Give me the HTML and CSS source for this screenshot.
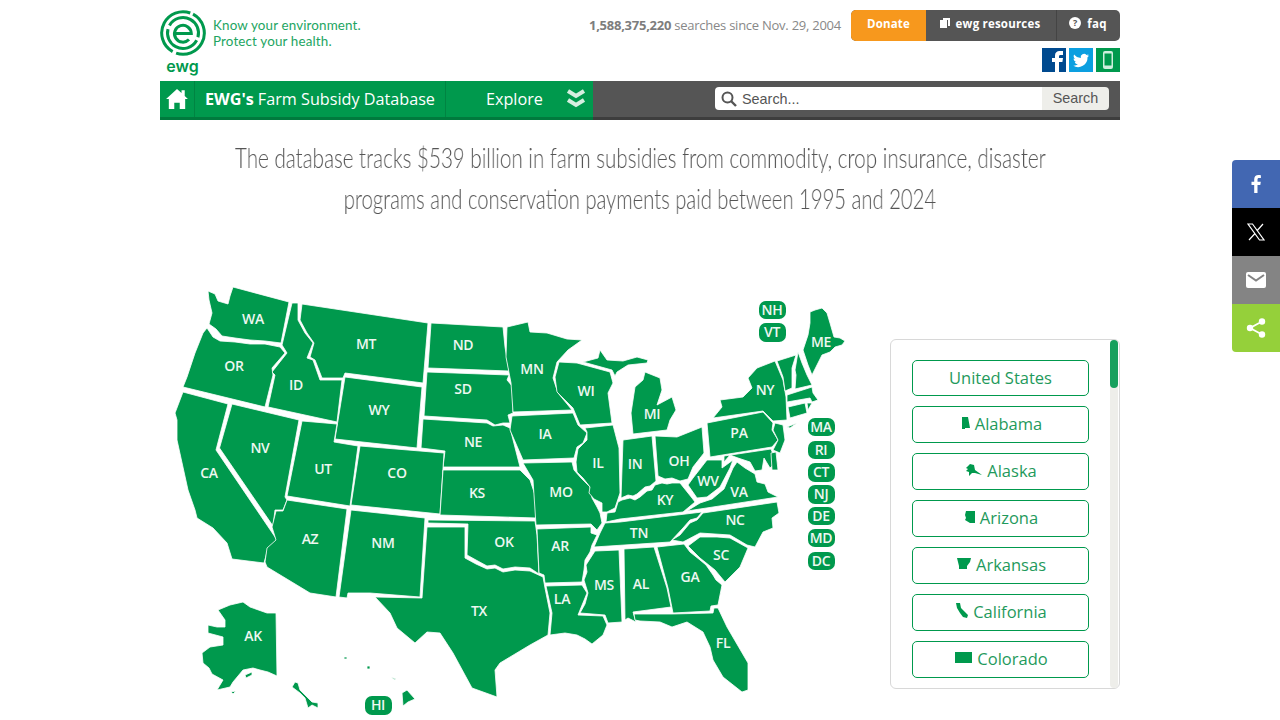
FILE: index.html
```html
<!DOCTYPE html>
<html lang="en">
<head>
<meta charset="utf-8">
<title>EWG's Farm Subsidy Database</title>
<link rel="stylesheet" href="styles.css">
</head>
<body>
<div class="page">
  <header class="top">
    <div class="brand">
      <div class="brand-mark">
        <svg class="logo" viewBox="0 0 46 46" width="46" height="46">
          <g fill="none" stroke="#00994d" stroke-width="3">
            <circle cx="23" cy="23" r="21.300" stroke-dasharray="63 3.900" transform="rotate(-62 23 23)"/>
            <circle cx="23" cy="23" r="15.500" stroke-dasharray="44.700 4" transform="rotate(28 23 23)"/>
            <path d="M14.500 23.500H31.300A8.400 8.400 0 1 0 29 29.500"/>
          </g>
        </svg>
        <span class="ewg">ewg</span>
      </div>
      <p class="tagline">Know your environment.<br>Protect your health.</p>
    </div>
    <div class="top-right">
      <div class="top-row">
        <span class="count"><b>1,588,375,220</b> searches since Nov. 29, 2004</span>
        <nav class="pills">
          <a class="pill donate">Donate</a>
          <a class="pill res">
            <svg viewBox="0 0 10 10" width="10" height="10"><path fill="#fff" d="M3 0h7v8H8V2H3zM0 2h7v8H0z"/></svg>
            ewg resources</a>
          <a class="pill faq"><span class="q">?</span>faq</a>
        </nav>
      </div>
      <div class="social">
        <span class="soc fb"><svg viewBox="0 0 24 24" width="24" height="24"><path fill="#fff" d="M13 24V14h-3v-4h3V7.500C13 4.500 15 3 17.500 3H21v4h-2.500C17.500 7 17 7.500 17 8.500V10h4l-.6 4H17v10z"/></svg></span>
        <span class="soc tw"><svg viewBox="0 0 24 24" width="24" height="24"><path fill="#fff" d="M20 7.500c-.6.3-1.200.4-1.900.5.700-.4 1.200-1 1.400-1.800-.6.4-1.300.6-2 .8a3.300 3.300 0 0 0-5.700 3C9 9.900 6.600 8.600 5.100 6.600c-.9 1.500-.4 3.400 1 4.400-.5 0-1-.2-1.500-.4 0 1.600 1.100 3 2.700 3.300-.5.100-1 .2-1.500.1.400 1.300 1.600 2.300 3.100 2.300A6.700 6.700 0 0 1 4 17.600 9.400 9.400 0 0 0 18.500 9.300c.6-.5 1.100-1.100 1.500-1.800z"/></svg></span>
        <span class="soc ph"><svg viewBox="0 0 24 24" width="24" height="24"><rect x="7" y="3" width="10" height="18" rx="2" fill="#cfeedd"/><rect x="8.500" y="5.500" width="7" height="12" fill="#00994d"/></svg></span>
      </div>
    </div>
  </header>

  <div class="navbar">
    <div class="nav-green">
      <a class="nav-home"><svg viewBox="0 0 24 22" width="24" height="20"><path fill="#fff" d="M12 0l5 4.500V1.500h3.500v6.200L24 11h-3v11h-6v-7H9v7H3V11H0z"/></svg></a>
      <a class="nav-title"><b>EWG's</b> Farm Subsidy Database</a>
      <a class="nav-explore">Explore
        <svg class="chev" viewBox="0 0 20 20" width="20" height="20"><path fill="none" stroke="#d6efe0" stroke-width="4" d="M2 2l8 5 8-5M2 11l8 5 8-5"/></svg>
      </a>
    </div>
    <div class="nav-gray">
      <form class="search">
        <span class="search-box">
          <svg viewBox="0 0 16 16" width="16" height="16"><circle cx="6.500" cy="6.500" r="5" fill="none" stroke="#555" stroke-width="2"/><path stroke="#555" stroke-width="2.400" d="M10 10l5 5"/></svg>
          Search...
        </span>
        <span class="search-btn">Search</span>
      </form>
    </div>
  </div>

  <h1 class="lead"><span class="l1">The database tracks $539 billion in farm subsidies from commodity, crop insurance, disaster</span><span class="l2">programs and conservation payments paid between 1995 and 2024</span></h1>

  <main class="content">
    <svg class="map" viewBox="160 280 700 440" width="700" height="440">
      <g class="states">
        <path d="M208 291L215 294 218 301 228 304 230 296 233 287 289 302 281 343 265 341 250 340 235 338 222 336 216 329 209 324 212 313 209 300Z"/>
        <path d="M207 328L213 337 220 341 235 342 250 344 265 344 280 347 285 353 272 368 273 375 265 407 183 387 187 377 195 353 203 333Z"/>
        <path d="M292 303L298 303 298 320 305 333 313 343 307 358 313 360 320 380 342 380 337 422 268 407 275 375 272 372 287 353 282 345Z"/>
        <path d="M302 304L428 323 423 383 345 373 343 378 322 378 315 360 310 357 314 343 307 333 300 320Z"/>
        <path d="M431 323L503 327 505 347 509 371 428 368Z"/>
        <path d="M427 372L509 375 507 380 513 387 513 413 508 415 510 423 503 423 495 425 487 420 424 416Z"/>
        <path d="M345 377L422 387 417 448 335 439Z"/>
        <path d="M423 419L487 423 493 426 503 425 510 428 520 467 443 467 445 451 421 448Z"/>
        <path d="M232 404L299 420 285 497 287 500 283 510 275 510 273 526 219.500 448Z"/>
        <path d="M183 392L228 404 216 450 271 531 277 540 267 552 264 563 232 559 227 543 213 528 197 518 195 510 188 490 177 440 177 420 175 413Z"/>
        <path d="M302 421L337 424 334 442 358 446 350 506 287 496Z"/>
        <path d="M360 446L444 453 440 514 351 505Z"/>
        <path d="M287 500L347 509 336 597 310 593 267 567 265 562 267 548 276 540 272 527 276 511 283 511Z"/>
        <path d="M351 510L425 518 420 597 370 593 348 593 347 598 339 597Z"/>
        <path d="M427 527L465 527 465 558 476 564 487 569 495 568 503 572 515 570 530 571 543 577 545 588 550 613 548 635 530 645 500 663 495 670 497 697 472 688 453 653 440 633 427 632 415 643 397 628 390 613 375 597 422 598Z"/>
        <path d="M428 520L535 521 537 535 539 574 530 568 515 567 503 569 495 565 487 566 476 560 467 555 468 524 428 523Z"/>
        <path d="M443 470L520 470 530 480 535 495 537 518 440 515Z"/>
        <path d="M507 327L528 322 530 332 547 333 567 339 582 340 568 350 557 362 553 378 558 393 572 410 513 412 511 383 506 357Z"/>
        <path d="M512 416L573 413 578 425 587 433 583 443 577 447 574 458 523 460 510 430Z"/>
        <path d="M523 463L572 462 574 470 581 478 590 487 592 498 597 507 600 513 602 523 597 530 591 524 536 525 535 510 533 480Z"/>
        <path d="M537 529L591 527 591 533 597 535 592 545 590 552 585 560 584 570 582 582 545 583 544 575 539 573Z"/>
        <path d="M546 586L582 585 587 593 578 615 603 616 607 625 603 635 592 644 585 639 577 635 565 633 550 635 552 613Z"/>
        <path d="M595 551L619 550 622 622 608 623 605 615 580 613 585 604 588 593 584 580 587 572 586 565Z"/>
        <path d="M624 549L654 547 667 588 671 607 633 612 636 622 628 618 625 620Z"/>
        <path d="M657 547L684 544 690 552 700 560 706 565 713 575 716 580 722 585 718 605 711 606 710 611 673 613 668 588Z"/>
        <path d="M634 614L672 614 713 613 714 608 718 608 727 627 748 663 748 690 742 692 723 677 713 660 710 647 703 632 687 622 672 627 660 622 640 621 635 620Z"/>
        <path d="M688 546L700 537 717 537 730 538 748 548 740 567 725 582 715 570 700 558Z"/>
        <path d="M672 540L680 535 690 523 697 520 703 513 777 502 779 513 772 518 773 528 763 532 755 547 747 545 730 535 700 533 683 542Z"/>
        <path d="M620 522L702 512 697 518 690 520 683 528 670 542 594 547 600 533 605 523Z"/>
        <path d="M622 500L630 498 635 500 640 497 647 491 652 490 655 485 662 483 667 484 672 483 680 483 692 498 695 502 683 512 620 519 606 522 607 513 615 512 618 502Z"/>
        <path d="M585 428L613 425 619 448 620 493 615 508 607 512 602 512 602 503 594 499 589 493 590 487 583 478 577 472 576 462 577 455 578 449 583 444 587 440 587 432Z"/>
        <path d="M623 440L652 436 656 481 650 486 645 487 637 494 633 496 628 495 621 498Z"/>
        <path d="M655 436L677 437 702 427 704 453 693 467 688 479 680 481 672 478 665 479 658 476Z"/>
        <path d="M645 372L660 378 662 390 657 405 672 397 676 410 670 420 667 430 633 434 631 413 635 387 643 380Z"/>
        <path d="M583 362L598 358 600 350 607 360 623 361 637 357 648 360 647 363 628 365 617 372 615 376 612 370Z"/>
        <path d="M559 362L577 363 610 372 613 383 608 393 612 423 580 425 573 408 557 392 555 377Z"/>
        <path d="M693 478L707 460 722 460 722 468 733 460 730 468 720 487 707 497 697 498 688 485Z"/>
        <path d="M733 468L737 462 745 468 755 474 757 482 765 484 768 492 778 497 687 511 700 503 712 499 724 489Z"/>
        <path d="M707 423L763 412 773 423 772 430 778 440 772 447 710 457Z"/>
        <path d="M724 456L771 449 776 462 770 468 764 458 762 470 755 471 750 462 738 458 730 455 724 462Z"/>
        <path d="M771 453L776 452 778 470 772 470Z"/>
        <path d="M775 423L783 425 785 440 780 453 773 450 778 440 773 430Z"/>
        <path d="M775 361L783 380 786 397 787 420 773 421 763 411 713 418 722 407 720 400 743 397 752 388 748 378 757 368Z"/>
        <path d="M787 427L797 423 790 428Z"/>
        <path d="M777 361L796 355 792 368 792 388 785 391 783 377Z"/>
        <path d="M798 352L802 363 807 375 812 385 795 389 796 375 795 370Z"/>
        <path d="M810 312L815 310 822 308 827 313 830 323 834 337 840 338 845 341 842 345 835 347 830 352 822 355 817 365 812 375 808 365 803 350 808 335 810 323Z"/>
        <path d="M787 395L812 387 813 393 818 400 812 402 810 398 787 402Z"/>
        <path d="M788 407L805 403 807 413 790 418Z"/>
        <path d="M807 403L812 403 808 410Z"/>
        <path d="M218 610L230 605 243 602 250 607 267 613 276 613 277 676 268 672 260 670 253 668 243 670 233 682 230 687 217 690 223 680 212 674 209 668 203 663 202 653 210 647 223 645 223 637 208 633 208 625 217 627 225 627 225 620Z"/>
        <path d="M292 687L295 682 298 683 300 690 307 697 312 702 318 703 318 708 312 705 308 708 305 698 300 693Z"/>
        <path d="M245 675L252 672 252 675 246 678Z"/>
        <path d="M231 692L236 691 233 694Z"/>
        <path d="M402 693L407 690 415 699 408 702 403 706Z"/>
        <path d="M344 657L347 657 347 659 344 659Z"/>
        <path d="M367 666L370 666 370 669 367 669Z"/>
        <path d="M391 677L396 679 395 680Z"/>
      </g>
      <g class="labels">
        <text x="253" y="324">WA</text><text x="234" y="371">OR</text><text x="296" y="390">ID</text>
        <text x="366" y="349">MT</text><text x="463" y="350">ND</text><text x="463" y="394">SD</text>
        <text x="379" y="415">WY</text><text x="260" y="453">NV</text><text x="209" y="478">CA</text>
        <text x="323" y="474">UT</text><text x="397" y="478">CO</text><text x="473" y="447">NE</text>
        <text x="477" y="498">KS</text><text x="310" y="544">AZ</text><text x="383" y="548">NM</text>
        <text x="504" y="547">OK</text><text x="479" y="616">TX</text><text x="253" y="641">AK</text>
        <text x="532" y="374">MN</text><text x="586" y="396">WI</text><text x="652" y="419">MI</text>
        <text x="545" y="439">IA</text><text x="598" y="468">IL</text><text x="635" y="469">IN</text>
        <text x="679" y="466">OH</text><text x="665" y="505">KY</text><text x="708" y="486">WV</text>
        <text x="739" y="497">VA</text><text x="735" y="525">NC</text><text x="639" y="538">TN</text>
        <text x="561" y="497">MO</text><text x="560" y="551">AR</text><text x="562" y="604">LA</text>
        <text x="604" y="590">MS</text><text x="641" y="589">AL</text><text x="690" y="582">GA</text>
        <text x="721" y="560">SC</text><text x="723" y="648">FL</text><text x="739" y="438">PA</text>
        <text x="765" y="395">NY</text><text x="821" y="347">ME</text>
      </g>
      <g class="tags">
        <rect x="759" y="301" width="27" height="18" rx="7"/><text x="772" y="315">NH</text>
        <rect x="759" y="323" width="27" height="19" rx="7"/><text x="772" y="337">VT</text>
        <rect x="808" y="418" width="27" height="18" rx="7"/><text x="821" y="432">MA</text>
        <rect x="808" y="441" width="27" height="18" rx="7"/><text x="821" y="455">RI</text>
        <rect x="808" y="463" width="27" height="19" rx="7"/><text x="821" y="477">CT</text>
        <rect x="808" y="485" width="27" height="19" rx="7"/><text x="821" y="499">NJ</text>
        <rect x="808" y="507" width="27" height="18" rx="7"/><text x="821" y="521">DE</text>
        <rect x="808" y="529" width="27" height="18" rx="7"/><text x="821" y="543">MD</text>
        <rect x="808" y="552" width="27" height="18" rx="7"/><text x="821" y="566">DC</text>
        <rect x="365" y="696" width="27" height="19" rx="7"/><text x="378" y="710">HI</text>
      </g>
    </svg>

    <aside class="panel">
      <div class="list">
        <a class="item first">United States</a>
        <a class="item"><svg viewBox="0 0 9 12" width="9" height="12"><path d="M1 0h6l2 11-5 0 0 1H1z"/></svg>Alabama</a>
        <a class="item"><svg viewBox="0 0 16 12" width="16" height="12"><path d="M1 3L4 0l4 1 1 5 7 5-7-2-3 0-3 3 0-4-3-1 2-2-2-1z"/></svg>Alaska</a>
        <a class="item"><svg viewBox="0 0 10 12" width="10" height="12"><path d="M1 0h9v12H5L0 9l1-2-1-3z"/></svg>Arizona</a>
        <a class="item"><svg viewBox="0 0 14 11" width="14" height="11"><path d="M0 0h14l-1 4-3 4v3H2V8z"/></svg>Arkansas</a>
        <a class="item"><svg viewBox="0 0 12 15" width="12" height="15"><path d="M0 0h4l1 5 7 7-1 3-4-1-3-4-3-5z"/></svg>California</a>
        <a class="item"><svg viewBox="0 0 17 11" width="17" height="11"><path d="M0 0h17v11H0z"/></svg>Colorado</a>
      </div>
      <div class="track"><div class="thumb"></div></div>
    </aside>
  </main>
</div>

<div class="share">
  <a class="sh sh-fb"><svg viewBox="0 0 24 24" width="24" height="24"><path fill="#fff" d="M13.500 21v-8h2.800l.5-3.200h-3.300V7.700c0-1 .3-1.600 1.700-1.600h1.700V3.200c-.3 0-1.300-.2-2.500-.2-2.500 0-4.200 1.500-4.200 4.300v2.500H7.500V13h2.700v8z"/></svg></a>
  <a class="sh sh-x"><svg viewBox="0 0 24 24" width="24" height="24"><path fill="none" stroke="#fff" stroke-width="1.200" d="M4 4h4.500l11.500 16h-4.500zM19 4l-6.200 7M11 13.500L5 20"/></svg></a>
  <a class="sh sh-mail"><svg viewBox="0 0 24 24" width="24" height="24"><rect x="2" y="4" width="20" height="16" rx="2" fill="#fff"/><path fill="none" stroke="#848484" stroke-width="2" d="M4 7l8 5.500L20 7"/></svg></a>
  <a class="sh sh-more"><svg viewBox="0 0 24 24" width="24" height="24"><g fill="#fff"><circle cx="18" cy="5.500" r="3.200"/><circle cx="6" cy="12" r="3.200"/><circle cx="18" cy="18.500" r="3.200"/></g><path stroke="#fff" stroke-width="1.800" d="M18 5.500L6 12l12 6.500" fill="none"/></svg></a>
</div>
</body>
</html>
```
FILE: styles.css
```css
* { box-sizing: border-box; }
html, body { margin: 0; height: 720px; overflow: hidden; background: #fff; }
body { font-family: "Open Sans", sans-serif; color: #555; }
a { text-decoration: none; color: inherit; }

.page { width: 960px; margin: 0 auto; }

.top { display: flex; justify-content: space-between; height: 81px; padding-top: 10px; }
.brand { display: flex; align-items: flex-start; gap: 7px; }
.brand-mark { width: 46px; display: flex; flex-direction: column; align-items: center; }
.logo { display: block; }
.ewg { font-family: Inter, sans-serif; font-size: 16px; line-height: 16px; font-weight: 600; color: #00994d; margin-top: 2px; margin-left: -1px; }
.tagline { margin: 7px 0 0; font-family: Lato, sans-serif; font-size: 13.400px; line-height: 16px; color: #1da562; letter-spacing: .15px; }

.top-right { display: flex; flex-direction: column; align-items: flex-end; gap: 7px; }
.top-row { display: flex; align-items: center; gap: 10px; height: 31px; }
.count { font-size: 13px; color: #888; letter-spacing: -.25px; padding-bottom: 2px; }
.count b { font-weight: 700; color: #7d7d7d; }
.pills { display: flex; height: 31px; border-radius: 5px; overflow: hidden; background: #555; color: #fff; font-size: 11.500px; font-weight: 700; letter-spacing: .2px; }
.pill { display: flex; align-items: center; gap: 6px; padding-bottom: 5px; }
.donate { width: 75px; justify-content: center; background: #f7981d; }
.res { width: 131px; justify-content: center; padding-right: 2px; border-right: 1px solid #444; }
.faq { width: 63px; justify-content: center; padding-right: 1px; }
.q { width: 12px; height: 12px; border-radius: 50%; background: #fff; color: #555; font-size: 9px; line-height: 12px; text-align: center; }

.social { display: flex; gap: 3px; }
.soc { width: 24px; height: 24px; display: block; overflow: hidden; }
.soc svg { display: block; }
.fb { background: #004a8f; }
.tw { background: #0c9fe0; }
.ph { background: #00994d; }

.navbar { display: flex; height: 39px; }
.nav-green { display: flex; width: 433px; background: #00994d; border-bottom: 3px solid #007a3d; color: #fff; font-size: 16.200px; }
.nav-home { width: 35px; display: flex; align-items: center; justify-content: center; border-right: 1px solid #008442; }
.nav-title { width: 251px; display: flex; align-items: center; justify-content: center; gap: 4px; border-right: 1px solid #008442; padding-bottom: 1px; }
.nav-title b { font-weight: 700; }
.nav-explore { flex: 1; display: flex; align-items: center; padding-left: 40px; gap: 23px; padding-bottom: 1px; }
.chev { display: block; }
.nav-gray { flex: 1; display: flex; justify-content: flex-end; background: #555; border-bottom: 3px solid #3d3d3d; padding: 6px 11px 0 0; }
.search { display: flex; height: 23px; font-family: "Liberation Sans", sans-serif; font-size: 14.400px; color: #555; }
.search-box { width: 327px; display: flex; align-items: center; gap: 5px; padding-left: 6px; background: #fff; border-radius: 4px 0 0 4px; }
.search-btn { width: 67px; display: flex; align-items: center; justify-content: center; background: #eeeeea; border-radius: 0 4px 4px 0; padding-bottom: 1px; }

.lead { margin: 17px 0 0; height: 147px; display: flex; flex-direction: column; align-items: center; font-family: Lato, sans-serif; font-weight: 300; font-size: 27px; line-height: 41px; color: #555; }
.lead span { display: block; flex: none; white-space: nowrap; will-change: transform; }
.l1 { transform: scaleX(.763); }
.l2 { transform: scaleX(.75); }

.content { display: flex; justify-content: space-between; align-items: flex-start; margin-top: -4px; }
.map { display: block; flex: none; }
.states path { fill: #00994d; stroke: #fff; stroke-width: .8; stroke-linejoin: round; }
.labels text, .tags text { font-family: "Open Sans", sans-serif; font-size: 14px; font-weight: 600; fill: #eef7f1; text-anchor: middle; letter-spacing: -.3px; }
.tags rect { fill: #00994d; }

.panel { width: 230px; height: 350px; margin-top: 59px; border: 1px solid #d8d8d8; border-radius: 6px; display: flex; justify-content: space-between; padding-right: 1px; }
.list { width: 219px; padding: 20px 0 0 21px; display: flex; flex-direction: column; gap: 10px; }
.item { width: 177px; height: 37px; display: flex; align-items: center; justify-content: center; gap: 5px; border: 1px solid #00994d; border-radius: 5px; color: #1f9a5c; font-size: 16.500px; padding: 0 0 2px 2px; }
.item.first { height: 36px; padding-left: 0; }
.item svg { fill: #00994d; display: block; margin-bottom: 2px; }
.track { width: 8px; background: #eeeeea; border-radius: 4px; }
.thumb { height: 48px; background: #17a05d; border-radius: 4px; }

.share { position: fixed; top: 160px; right: 0; width: 48px; border-radius: 4px 0 0 4px; overflow: hidden; }
.sh { display: flex; align-items: center; justify-content: center; height: 48px; }
.sh-fb { background: #4267b2; }
.sh-x { background: #000; }
.sh-mail { background: #848484; }
.sh-more { background: #95d03a; }
```
